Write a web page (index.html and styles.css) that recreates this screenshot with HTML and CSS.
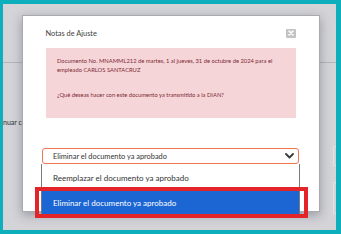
FILE: index.html
```html
<!DOCTYPE html>
<html lang="es">
<head>
<meta charset="utf-8">
<title>Notas de Ajuste</title>
<link rel="stylesheet" href="styles.css">
</head>
<body>
<div class="screen">
  <div class="page">
    <div class="page-top"></div>
    <div class="page-row">nuar con el proceso</div>
    <div class="page-side">
      <span class="side-box one"></span>
      <span class="side-box two"></span>
    </div>
  </div>

  <div class="modal">
    <div class="modal-header">
      <span class="modal-title">Notas de Ajuste</span>
      <span class="close">
        <svg width="6" height="6" viewBox="0 0 6 6"><path d="M1 1 L5 5 M5 1 L1 5" stroke="#fff" stroke-width="1.6" stroke-linecap="round"/></svg>
      </span>
    </div>
    <div class="alert">
      <p class="alert-text">Documento No. MNAMML212 de martes, 1 al jueves, 31 de octubre de 2024 para el empleado CARLOS SANTACRUZ</p>
      <p class="alert-text question">¿Qué deseas hacer con este documento ya transmitido a la DIAN?</p>
    </div>
    <div class="select">
      <span class="select-value">Eliminar el documento ya aprobado</span>
      <svg class="chevron" width="9" height="6" viewBox="0 0 9 6"><path d="M1 1 L4.5 4.5 L8 1" fill="none" stroke="#3a3a3a" stroke-width="1.8" stroke-linecap="round" stroke-linejoin="round"/></svg>
    </div>
  </div>

  <div class="dropdown">
    <div class="option">Reemplazar el documento ya aprobado</div>
    <div class="option selected">Eliminar el documento ya aprobado</div>
  </div>
  <div class="highlight"></div>
</div>
</body>
</html>
```

FILE: styles.css
```css
html, body {
  margin: 0;
  padding: 0;
}
body {
  background: #0cafbb;
  padding: 4px 5px 4px 3px;
  width: 341px;
  height: 234px;
  box-sizing: border-box;
  font-family: Lato, "Open Sans", sans-serif;
  overflow: hidden;
}
.screen {
  position: relative;
  height: 226px;
  background: #d3d3d8;
  overflow: hidden;
}
.page {
  height: 100%;
}
.page-top {
  height: 58px;
  border-bottom: 1px solid #b4b4b9;
}
.page-row {
  margin-top: 55px;
  font-size: 7px;
  color: #2e2e2e;
  white-space: nowrap;
  line-height: 9px;
}
.page-side {
  position: absolute;
  right: 0;
  top: 142px;
  width: 3px;
  display: flex;
  flex-direction: column;
  gap: 16px;
}
.side-box {
  display: block;
  width: 3px;
  border: 1px solid #e4e4e8;
  border-right: none;
  border-radius: 2px 0 0 2px;
}
.side-box.one { height: 18px; }
.side-box.two { height: 30px; }

.modal {
  position: absolute;
  left: 19px;
  top: 11px;
  width: 298px;
  height: 197px;
  background: #fff;
  border: 1px solid #a9a9b0;
  box-sizing: border-box;
  box-shadow: 0 3px 10px rgba(40, 40, 60, 0.35);
}
.modal-header {
  display: flex;
  justify-content: space-between;
  align-items: center;
  padding: 12px 23px 0 22.5px;
  height: 10px;
}
.modal-title {
  font-size: 7.4px;
  color: #3e3e3e;
  line-height: 9px;
}
.close {
  width: 10px;
  height: 9px;
  background: #c3c3c5;
  display: flex;
  align-items: center;
  justify-content: center;
  border-radius: 1px;
}
.close svg { display: block; }
.alert {
  margin: 10px 23px 0 23px;
  height: 70px;
  background: #f6d5d9;
  padding: 9px 16px 0 11px;
  box-sizing: border-box;
}
.alert-text {
  margin: 0;
  font-size: 5.8px;
  line-height: 8.5px;
  color: #7c2a32;
}
.alert-text.question {
  margin-top: 17px;
}
.select {
  margin: 30px 20px 0 19px;
  height: 16px;
  border: 1px solid #ef7552;
  border-radius: 3px;
  background: #fefefe;
  box-sizing: border-box;
  display: flex;
  align-items: center;
  justify-content: space-between;
  padding: 0 4px 0 10px;
}
.select-value {
  font-size: 7.4px;
  color: #333;
  line-height: 9px;
}
.chevron { display: block; }

.dropdown {
  position: absolute;
  left: 38px;
  top: 160px;
  width: 259px;
  background: #fff;
  border: 1px solid #7a7a7a;
  border-top: none;
  box-sizing: border-box;
}
.option {
  height: 26.5px;
  display: flex;
  align-items: center;
  padding: 2px 0 0 11px;
  box-sizing: border-box;
  font-size: 8px;
  color: #333;
}
.option.selected {
  height: 23.5px;
  padding-top: 1px;
  background: #1b66d2;
  color: #fff;
}
.highlight {
  position: absolute;
  left: 32px;
  top: 183px;
  width: 273px;
  height: 31px;
  border: 4px solid #e3252a;
  box-sizing: border-box;
}
```
